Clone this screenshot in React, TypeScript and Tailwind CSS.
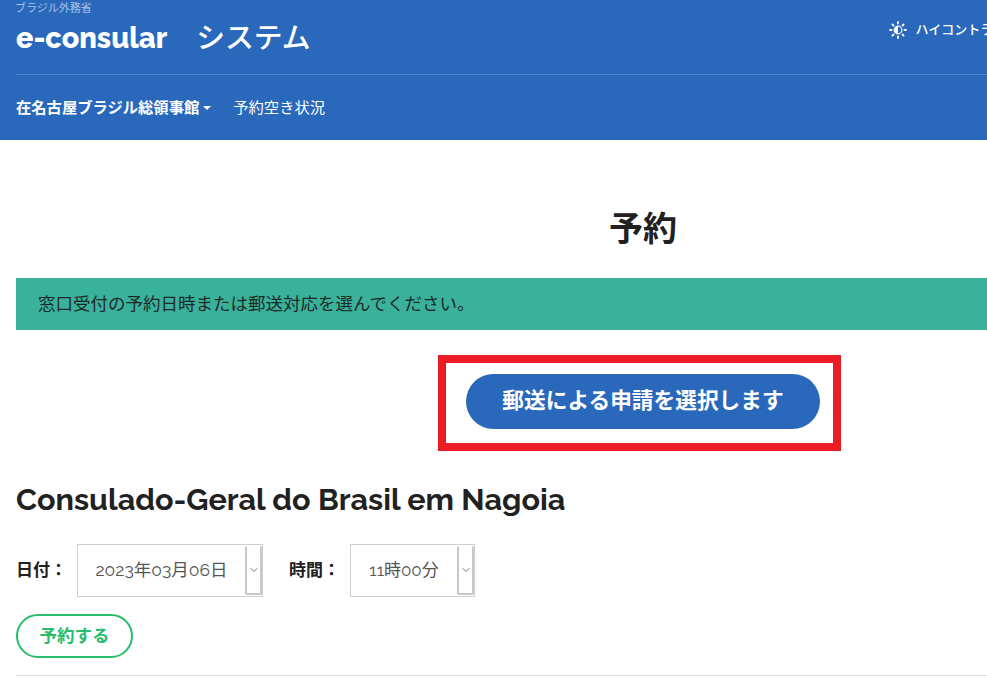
import React from 'react';
import { ChevronDown } from 'lucide-react';

const font = "font-['Raleway','Lato','Noto_Sans_CJK_JP',sans-serif]";

function ContrastIcon() {
  return (
    <svg viewBox="0 0 18 18" className="h-[18px] w-[18px]" fill="none" stroke="white" strokeWidth="1.8" strokeLinecap="round">
      <circle cx="9" cy="9" r="3.8" strokeWidth="1.2" />
      <path d="M9 5.2a3.8 3.8 0 0 0 0 7.6z" fill="white" stroke="none" />
      <path d="M9 1v1.6M9 15.4V17M1 9h1.6M15.4 9H17M3.4 3.4l1.1 1.1M13.5 13.5l1.1 1.1M3.4 14.6l1.1-1.1M13.5 4.5l1.1-1.1" />
    </svg>
  );
}

function Picker({ value, width, textWidth, size }: { value: string; width: string; textWidth: string; size: string }) {
  return (
    <div className={`flex h-[53px] items-stretch border border-[#cfcfcf] bg-white ${width}`}>
      <div className={`flex items-center justify-center text-[#555] ${size} ${textWidth}`}>{value}</div>
      <div className="my-px ml-auto flex w-[17px] items-center justify-center rounded-[2px] border-x-2 border-b-2 border-[#c8c8c8] bg-white">
        <ChevronDown className="h-3 w-3 text-[#444]" strokeWidth={1.5} />
      </div>
    </div>
  );
}

export default function App() {
  return (
    <div className={`h-[685px] w-[987px] overflow-hidden bg-white ${font}`}>
      <div className="w-[1286px]">
        <header className="h-[140px] bg-[#2a68bc] px-4 text-white">
          <div className="flex h-[74px] justify-between">
            <div className="pt-px">
              <p className="-ml-px h-[15px] text-[11px] leading-[15px] text-[#a9c3e6]">ブラジル外務省</p>
              <h1 className="mt-[2px] text-[28.8px] font-extrabold leading-[40px]">
                e-consular<span className="ml-[29px] font-medium">システム</span>
              </h1>
            </div>
            <div className="mt-[20px] flex h-5 items-center gap-[9px] pr-[251px] text-[13px] font-medium">
              <ContrastIcon />
              <span>ハイコントラスト</span>
            </div>
          </div>
          <div className="h-px bg-[#5285cb]" />
          <nav className="mt-[23px] flex items-center text-[15.3px] leading-5">
            <span className="font-bold">在名古屋ブラジル総領事館</span>
            <span className="ml-[4px] h-0 w-0 border-x-4 border-t-4 border-x-transparent border-t-white" />
            <span className="ml-[22px]">予約空き状況</span>
          </nav>
        </header>

        <main className="px-4">
          <h2 className="mt-[66px] text-center text-[34px] font-bold leading-[46px] text-[#212121]">予約</h2>
          <div className="mt-[26px] flex h-[52px] items-center bg-[#3ab19b] pl-[22px] text-[17.5px] text-[#1d2b28]">
            窓口受付の予約日時または郵送対応を選んでください。
          </div>

          <div className="mt-[25px] flex justify-center pr-[7px]">
            <div className="border-[8px] border-[#ec1c24] pt-[11px] pr-[13px] pb-[14px] pl-5">
              <button className="h-[55px] w-[354px] rounded-full bg-[#2a68bc] text-[21.7px] font-bold text-white">
                郵送による申請を選択します
              </button>
            </div>
          </div>

          <h3 className="mt-[28px] text-[30.6px] font-bold leading-[40px] text-[#212121]">
            Consulado-Geral do Brasil em Nagoia
          </h3>

          <div className="mt-[25px] flex items-center text-[#212121]">
            <span className="w-[61px] text-[17px] font-bold">日付：</span>
            <Picker value="2023年03月06日" width="w-[186px]" textWidth="w-[168px]" size="text-[17.5px]" />
            <span className="ml-[26px] w-[61px] text-[17px] font-bold">時間：</span>
            <Picker value="11時00分" width="w-[125px]" textWidth="w-[107px]" size="text-[17px]" />
          </div>

          <button className="mt-[17px] block h-[44px] w-[117px] rounded-full border-2 border-[#27bd6b] text-[17.5px] font-bold text-[#27bd6b]">
            予約する
          </button>

          <hr className="mt-[17px] border-[#dedede]" />
        </main>
      </div>
    </div>
  );
}
